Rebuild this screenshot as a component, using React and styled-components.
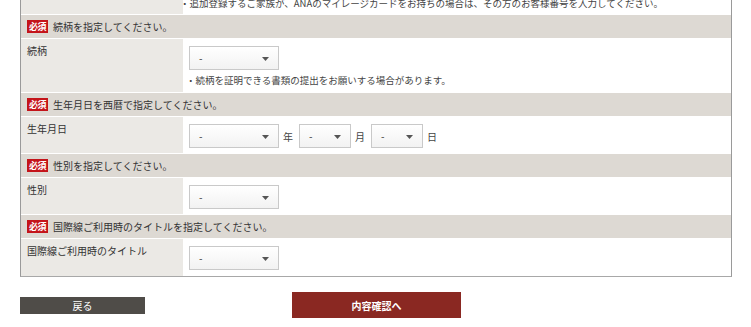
import React from "react";
import styled, { createGlobalStyle } from "styled-components";

const Global = createGlobalStyle`
  html, body { margin: 0; padding: 0; background: #fff; }
  body {
    font-family: "Noto Sans CJK JP", "Noto Sans", sans-serif;
    color: #333;
    overflow: hidden;
  }
`;

const Page = styled.div`
  width: 751px;
  height: 327px;
  overflow: hidden;
  padding-left: 20px;
  box-sizing: border-box;
`;

const Table = styled.div`
  width: 712px;
  margin-top: -5px;
  border-left: 1px solid #9a9a9a;
  border-right: 1px solid #9a9a9a;
  border-bottom: 1px solid #a8a8a8;
  box-sizing: border-box;
`;

const Row = styled.div`
  display: grid;
  grid-template-columns: 162px 1fr;
  border-bottom: ${(p) => (p.$last ? "none" : "1px solid #fff")};
  min-height: ${(p) => p.$h}px;
`;

const Label = styled.div`
  background: #ebe9e5;
  padding: 5px 6px 0;
  font-size: 10px;
  line-height: 14px;
  color: #333;
`;

const Content = styled.div`
  background: #fff;
  padding: ${(p) => p.$pad || "7px 6px 5px"};
  display: flex;
  flex-direction: column;
  align-items: flex-start;
`;

const Header = styled.div`
  height: 23px;
  background: #ddd9d3;
  border-bottom: 1px solid #fff;
  display: flex;
  align-items: center;
  gap: 5px;
  padding-left: 6px;
  font-size: 10px;
  color: #333;
`;

const Badge = styled.span`
  display: inline-flex;
  align-items: center;
  justify-content: center;
  width: 21px;
  height: 13px;
  background: #c4141a;
  color: #fff;
  font-size: 9px;
  font-weight: 700;
  letter-spacing: -0.5px;
  line-height: 1;
`;

const Note = styled.div`
  font-size: 9.5px;
  line-height: 14px;
  color: #444;
  margin-top: ${(p) => p.$mt || 0}px;
  margin-left: -3px;
  white-space: nowrap;
`;

const Inline = styled.div`
  display: flex;
  align-items: center;
`;

const Unit = styled.span`
  font-size: 10px;
  color: #444;
  margin: 0 6px 0 4px;
`;

const Combo = styled.div`
  position: relative;
  display: flex;
  align-items: center;
  width: ${(p) => p.$w}px;
  height: 24px;
  box-sizing: border-box;
  border: 1px solid #c9c9c9;
  background: linear-gradient(#ffffff, #f2f2f2);
  padding: 0 0 1px 9px;
  font-size: 10px;
  line-height: 1;
  color: #333;
`;

const Arrow = styled.svg`
  position: absolute;
  right: 9px;
  top: 10px;
  width: 7px;
  height: 4px;
`;

const Buttons = styled.div`
  display: flex;
  align-items: center;
  margin-top: 15px;
`;

const Button = styled.button`
  width: ${(p) => p.$w}px;
  height: ${(p) => p.$h}px;
  margin-left: ${(p) => p.$ml || 0}px;
  border: none;
  background: ${(p) => p.$bg};
  color: #fff;
  font-family: inherit;
  font-size: 10px;
  font-weight: ${(p) => (p.$bold ? 700 : 400)};
  padding: 0;
  cursor: pointer;
`;

function Dropdown({ w }) {
  return (
    <Combo $w={w} role="combobox" aria-expanded="false">
      -
      <Arrow viewBox="0 0 7 4">
        <path d="M0 0 H7 L3.5 4 Z" fill="#555" />
      </Arrow>
    </Combo>
  );
}

export default function App() {
  return (
    <>
      <Global />
      <Page>
        <Table>
          <Row $h={19}>
            <Label />
            <Content $pad="0 6px 4px 0">
              <Note style={{ marginTop: 1 }}>
                ・追加登録するご家族が、ANAのマイレージカードをお持ちの場合は、その方のお客様番号を入力してください。
              </Note>
            </Content>
          </Row>

          <Header>
            <Badge>必須</Badge>続柄を指定してください。
          </Header>
          <Row $h={53}>
            <Label>続柄</Label>
            <Content>
              <Dropdown w={90} />
              <Note $mt={3}>・続柄を証明できる書類の提出をお願いする場合があります。</Note>
            </Content>
          </Row>

          <Header>
            <Badge>必須</Badge>生年月日を西暦で指定してください。
          </Header>
          <Row $h={36}>
            <Label>生年月日</Label>
            <Content>
              <Inline>
                <Dropdown w={90} />
                <Unit>年</Unit>
                <Dropdown w={52} />
                <Unit>月</Unit>
                <Dropdown w={52} />
                <Unit>日</Unit>
              </Inline>
            </Content>
          </Row>

          <Header>
            <Badge>必須</Badge>性別を指定してください。
          </Header>
          <Row $h={36}>
            <Label>性別</Label>
            <Content>
              <Dropdown w={90} />
            </Content>
          </Row>

          <Header>
            <Badge>必須</Badge>国際線ご利用時のタイトルを指定してください。
          </Header>
          <Row $h={37} $last>
            <Label>国際線ご利用時のタイトル</Label>
            <Content>
              <Dropdown w={90} />
            </Content>
          </Row>
        </Table>

        <Buttons>
          <Button $w={125} $h={17} $bg="#4f4c48">戻る</Button>
          <Button $w={169} $h={26} $ml={147} $bg="#8a2822" $bold>内容確認へ</Button>
        </Buttons>
      </Page>
    </>
  );
}
